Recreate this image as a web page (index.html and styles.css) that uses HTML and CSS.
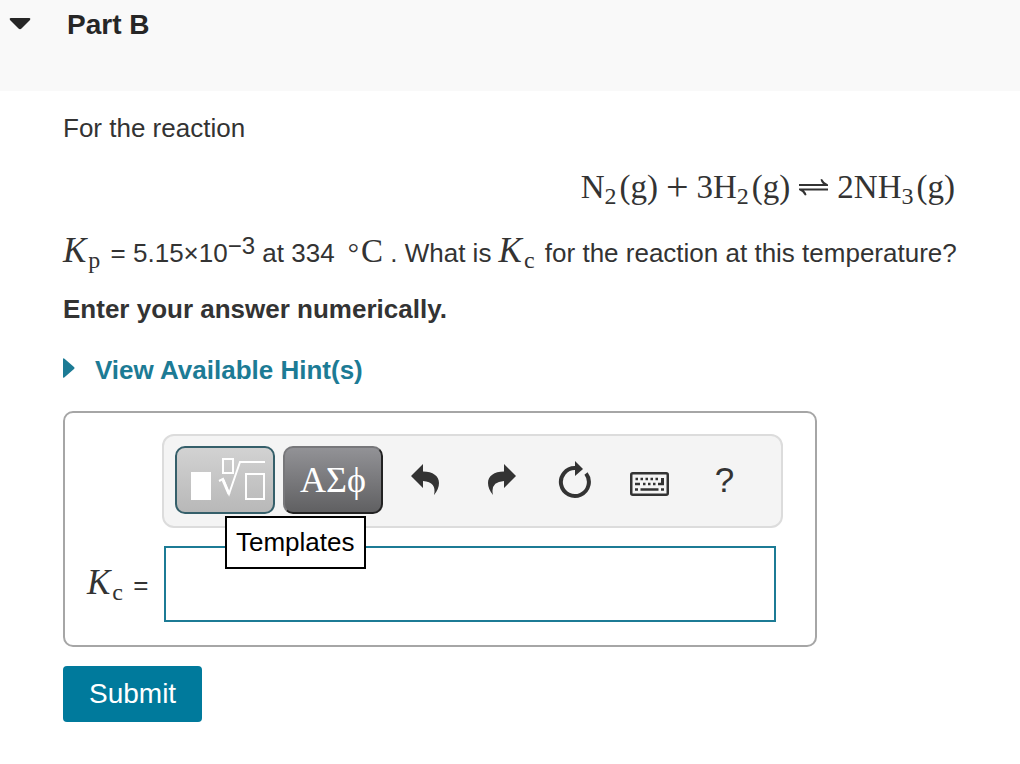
FILE: index.html
```html
<!DOCTYPE html>
<html lang="en">
<head>
<meta charset="utf-8">
<meta name="viewport" content="width=device-width, initial-scale=1">
<title>Part B</title>
<link rel="stylesheet" href="styles.css">
</head>
<body>
<header class="part-header">
  <button class="collapse" type="button" aria-label="Collapse Part B">
    <svg width="22" height="12" viewBox="0 0 22 12"><path d="M1.500 0H20.500Q22 .5 21 2L12.500 10.500Q11 12 9.500 10.500L1 2Q0 .5 1.500 0Z" fill="#262626"/></svg>
  </button>
  <h1 class="part-title">Part B</h1>
</header>
<main class="content">
  <p class="intro">For the reaction</p>
  <div class="equation">
    <span class="species">N<sub>2</sub>(g)</span>
    <span class="plus">+</span>
    <span class="species">3H<sub>2</sub>(g)</span>
    <svg class="equilibrium" role="img" aria-label="in equilibrium with" width="31" height="18" viewBox="0 0 31 18"><path d="M1 6H25Q23 4 22.500 1.500L24 1Q26 5 30 6.500V8H1ZM30 12.500H6Q8 14.500 8.500 17L7 17.500Q5 13.500 1 12V10.500H30Z" fill="#333"/></svg>
    <span class="species">2NH<sub>3</sub>(g)</span>
  </div>
  <p class="question"><span class="math"><i>K</i><sub>p</sub></span> = 5.15×10<sup>−3</sup> at 334 <span class="math unit"><span class="degree">°</span>C</span> . What is <span class="math"><i>K</i><sub>c</sub></span> for the reaction at this temperature?</p>
  <p class="instruction">Enter your answer numerically.</p>
  <a class="hints" href="#hints">
    <svg width="12" height="20" viewBox="0 0 12 20"><path d="M0 1Q0-.5 1.500.8L11 9Q12 10 11 11L1.500 19.200Q0 20.500 0 19Z" fill="#1c7b95"/></svg>
    <span>View Available Hint(s)</span>
  </a>
  <form class="answer">
    <div class="toolbar">
      <div class="tip-anchor">
        <button class="tool templates" type="button" aria-describedby="tip" aria-label="Templates">
          <svg width="80" height="46" viewBox="-5 1 80 46" fill="none" stroke="#fff" stroke-width="2"><path d="M1 16H21V44H1Z" fill="#fff" stroke="none"/><path d="M33 3H43V17H33Z"/><path d="M56 18H74V43H56Z"/><path d="M29 25L33 23L39 38L50 6H75"/><path d="M33 24L39 38" stroke-width="3"/></svg>
        </button>
        <span class="tip" id="tip" role="tooltip">Templates</span>
      </div>
      <button class="tool symbols" type="button" aria-label="Symbols">ΑΣϕ</button>
      <div class="icons">
        <button class="icon" type="button" aria-label="Undo"><svg width="28" height="32" viewBox="0 0 28 32"><path d="M0 12L12 0V7.500C22 7.500 28 12 28 19Q28 25 23 31Q26 18 12 17V24Z" fill="#333"/></svg></button>
        <button class="icon redo" type="button" aria-label="Redo"><svg width="28" height="32" viewBox="0 0 28 32"><path d="M28 12L16 0V7.500C6 7.500 0 12 0 19Q0 25 5 31Q2 18 16 17V24Z" fill="#333"/></svg></button>
        <button class="icon" type="button" aria-label="Reset"><svg width="34" height="38" viewBox="0 0 34 38"><path d="M17 7A14 14 0 1 0 28 12.500" fill="none" stroke="#333" stroke-width="4"/><path d="M17 0L25 8L17 15Z" fill="#333"/></svg></button>
        <button class="icon keyboard" type="button" aria-label="Keyboard"><svg width="39" height="24" viewBox="0 0 39 24" fill="none" stroke="#333"><rect x="1.250" y="1.250" width="36.500" height="21.500" rx="1.500" stroke-width="2.500"/><path d="M5.500 7H29" stroke-width="2.500" stroke-dasharray="2.500 2.500"/><path d="M5 12H10M13 12H15.500M18 12H20.500M23 12H25.500M28 12H34M5 17.500H8M10.500 17.500H28.500M31 17.500H34" stroke-width="2.500"/><path d="M32.500 6V13" stroke-width="3"/></svg></button>
        <button class="icon help" type="button" aria-label="Help">?</button>
      </div>
    </div>
    <label class="answer-label" for="kc"><span class="math"><i>K</i><sub>c</sub></span> =</label>
    <input class="answer-input" id="kc" type="text" autocomplete="off">
  </form>
  <button class="submit" type="button">Submit</button>
</main>
</body>
</html>
```
FILE: styles.css
```css
* { box-sizing: border-box; }
body {
  margin: 0;
  background: #fff;
  color: #333;
  font: 26px/30px "Liberation Sans", Arial, sans-serif;
}
button { padding: 0; border: 0; background: none; color: inherit; font: inherit; cursor: pointer; }
svg { display: block; flex: none; }
p { margin: 0; }
sub, sup { line-height: 0; }
.part-header {
  display: flex;
  align-items: flex-start;
  gap: 36px;
  min-height: 91px;
  padding: 9px;
  background: #f9f9f9;
  color: #262626;
}
.collapse { padding: 9px 0; }
.part-title { margin: 0; font-size: 28px; line-height: 32px; }
.content { padding: 22px 63px 40px; }
.math, .equation { font-family: "Liberation Serif", "Times New Roman", serif; font-size: 33px; }
.math i { font-size: 35px; line-height: 0; }
.math sub, .equation sub { font-size: 24px; vertical-align: -6px; }
.math sub { margin: 0 3px 0 2px; }
.equation {
  display: flex;
  justify-content: flex-end;
  align-items: center;
  gap: 8px;
  margin-top: 24px;
  padding-right: 2px;
  line-height: 40px;
}
.species sub { margin-right: 3px; }
.plus { font-size: 40px; }
.question { margin-top: 24px; line-height: 40px; }
.question sup { font-size: 24px; vertical-align: 8px; }
.unit { margin-left: 6px; }
.degree { margin-right: 2px; font-size: 28px; line-height: 0; }
.instruction { margin-top: 21px; font-weight: bold; }
.hints {
  display: flex;
  align-items: center;
  gap: 20px;
  width: fit-content;
  margin-top: 31px;
  color: #1c7b95;
  font-weight: bold;
  text-decoration: none;
}
.hints svg { margin-bottom: 4px; }
.answer {
  display: grid;
  grid-template-columns: 75px 1fr;
  row-gap: 18px;
  align-items: center;
  max-width: 754px;
  margin-top: 26px;
  padding: 21px 32px 23px 22px;
  border: 2px solid #a6a6a6;
  border-radius: 10px;
}
.toolbar {
  grid-column: 2;
  display: flex;
  gap: 8px;
  padding: 10px 11px 12px;
  border: 2px solid #dcdcdc;
  border-radius: 12px;
  background: #f4f4f4;
}
.tool {
  display: flex;
  align-items: center;
  justify-content: center;
  width: 100px;
  height: 68px;
  border: 2px solid #355f6a;
  border-radius: 10px;
  color: #fff;
}
.templates { background: linear-gradient(#d2d2d2, #b8b8b8); }
.symbols {
  border-color: #77777a #222 #222 #77777a;
  background: linear-gradient(#929296, #606062);
  font-family: "Liberation Serif", "Times New Roman", serif;
  font-size: 36px;
}
.tip-anchor { position: relative; }
.tip {
  position: absolute;
  z-index: 1;
  top: 70px;
  left: 50px;
  padding: 9px 9px 10px;
  border: 2px solid #000;
  background: #fff;
  color: #000;
}
.icons { display: flex; flex: 1; margin-left: -4px; }
.icon { display: grid; flex: 0 0 75px; place-items: center; }
.redo { padding-left: 4px; }
.keyboard { padding-top: 8px; }
.help { font-size: 35px; }
.answer-input {
  min-width: 0;
  height: 76px;
  margin: 0 7px 0 2px;
  padding: 0 16px;
  border: 2px solid #1c7b95;
  border-radius: 0;
  background: #fff;
  color: inherit;
  font: inherit;
}
.submit {
  display: block;
  margin-top: 19px;
  padding: 12px 26px;
  border-radius: 4px;
  background: #007a9c;
  color: #fff;
  font-size: 28px;
  line-height: 32px;
}
```
